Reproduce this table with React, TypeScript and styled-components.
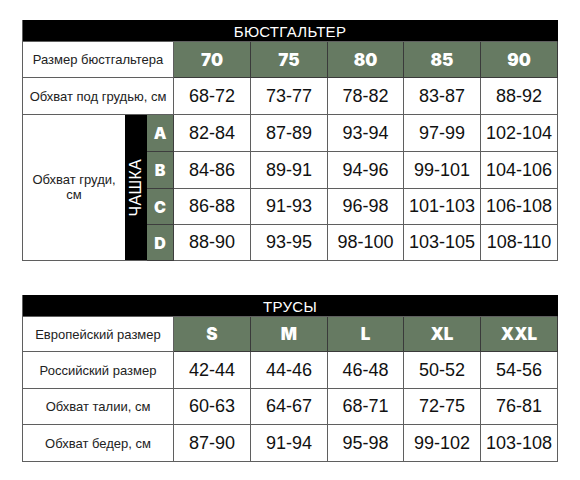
import * as React from "react"
import styled, {createGlobalStyle} from "styled-components"

const GlobalStyle = createGlobalStyle`
  html, body {
    margin: 0;
    padding: 0;
    background: #fff;
  }
  body {
    font-family: "Liberation Sans", Arial, sans-serif;
    color: #111;
  }
`

const LINE = "#5f5f5f"
const GREEN = "#667a62"

const braSizes = ["70", "75", "80", "85", "90"]
const underBust = ["68-72", "73-77", "78-82", "83-87", "88-92"]
const cups: {letter: string, values: string[]}[] = [
    {letter: "A", values: ["82-84", "87-89", "93-94", "97-99", "102-104"]},
    {letter: "B", values: ["84-86", "89-91", "94-96", "99-101", "104-106"]},
    {letter: "C", values: ["86-88", "91-93", "96-98", "101-103", "106-108"]},
    {letter: "D", values: ["88-90", "93-95", "98-100", "103-105", "108-110"]},
]

const briefSizes = ["S", "M", "L", "XL", "XXL"]
const briefRows: {label: string, values: string[]}[] = [
    {label: "Российский размер", values: ["42-44", "44-46", "46-48", "50-52", "54-56"]},
    {label: "Обхват талии, см", values: ["60-63", "64-67", "68-71", "72-75", "76-81"]},
    {label: "Обхват бедер, см", values: ["87-90", "91-94", "95-98", "99-102", "103-108"]},
]

export default function App() {
    return (
        <Page>
            <GlobalStyle />
            <Table $rows="22px 36px 37px 37px 37px 36px 36px">
                <Title>БЮСТГАЛЬТЕР</Title>

                <Label $span={3}>Размер бюстгальтера</Label>
                {braSizes.map((s) => <SizeHead key={s}>{s}</SizeHead>)}

                <Label $span={3}>Обхват под грудью, см</Label>
                {underBust.map((v) => <Value key={v}>{v}</Value>)}

                <BustLabel>Обхват груди,<br />см</BustLabel>
                <CupStrip><CupText>ЧАШКА</CupText></CupStrip>
                {cups.map((cup, i) => (
                    <React.Fragment key={cup.letter}>
                        <CupLetter style={{gridRow: i + 4}}>{cup.letter}</CupLetter>
                        {cup.values.map((v) => <Value key={v} style={{gridRow: i + 4}}>{v}</Value>)}
                    </React.Fragment>
                ))}
            </Table>

            <Table $rows="22px 35px 37px 36px 37px">
                <Title>ТРУСЫ</Title>

                <Label $span={3}>Европейский размер</Label>
                {briefSizes.map((s) => <SizeHead key={s}>{s}</SizeHead>)}

                {briefRows.map((row) => (
                    <React.Fragment key={row.label}>
                        <Label $span={3}>{row.label}</Label>
                        {row.values.map((v) => <Value key={v}>{v}</Value>)}
                    </React.Fragment>
                ))}
            </Table>
        </Page>
    )
}

const Page = styled("div")`
  display: flex;
  flex-direction: column;
  gap: 34px;
  padding: 20px 0 0 22px;
`

const Table = styled("div")<{$rows: string}>`
  display: grid;
  grid-template-columns: 102px 22px 27px 77px 77px 76px 77px 77px;
  grid-template-rows: ${(p) => p.$rows};
  width: fit-content;
  border-left: 1px solid ${LINE};
`

const Cell = styled("div")`
  box-sizing: border-box;
  display: flex;
  align-items: center;
  justify-content: center;
  text-align: center;
  border-right: 1px solid ${LINE};
  border-bottom: 1px solid ${LINE};
`

const Title = styled(Cell)`
  grid-column: 1 / -1;
  background: #000;
  color: #fff;
  font-size: 15px;
  letter-spacing: 0.3px;
  padding-top: 1px;
  border-color: #000;
  border-bottom-color: ${LINE};
`

const Label = styled(Cell)<{$span: number}>`
  grid-column: span ${(p) => p.$span};
  font-size: 13px;
  color: #222;
`

const BustLabel = styled(Cell)`
  grid-column: 1;
  grid-row: 4 / span 4;
  font-size: 13px;
  line-height: 15px;
  color: #222;
  border-right: none;
  padding-bottom: 2px;
`

const CupStrip = styled(Cell)`
  grid-column: 2;
  grid-row: 4 / span 4;
  background: #000;
  border-right: none;
`

const CupText = styled("span")`
  writing-mode: vertical-rl;
  transform: rotate(180deg);
  color: #fff;
  font-size: 16px;
  letter-spacing: 0.3px;
`

const CupLetter = styled(Cell)`
  grid-column: 3;
  background: ${GREEN};
  color: #fff;
  font-family: Inter, "Liberation Sans", sans-serif;
  font-weight: 900;
  font-size: 16px;
  border-bottom-color: #3d3d3d;
  border-right-color: #3d3d3d;
`

const SizeHead = styled(Cell)`
  background: ${GREEN};
  color: #fff;
  font-family: Inter, "Liberation Sans", sans-serif;
  font-weight: 900;
  font-size: 17px;
  border-color: #3a3a3a;
`

const Value = styled(Cell)`
  font-size: 18px;
  color: #111;
`
